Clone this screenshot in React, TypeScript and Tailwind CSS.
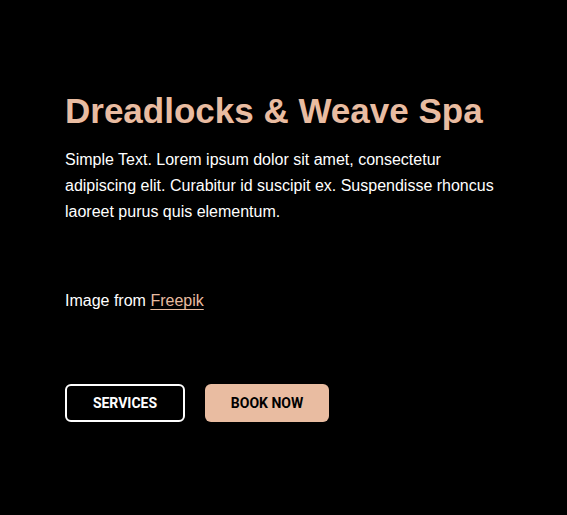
export default function App() {
  return (
    <div className="min-h-[515px] w-full bg-black px-[65px] pt-[90px]" style={{ fontFamily: '"Liberation Sans", Arial, sans-serif' }}>
      <h1 className="text-[35px] font-bold leading-[42px] text-[#e9bca1]">Dreadlocks &amp; Weave Spa</h1>
      <p className="mt-[15px] max-w-[440px] text-[16px] leading-[26px] text-white">
        Simple Text. Lorem ipsum dolor sit amet, consectetur adipiscing elit. Curabitur id suscipit ex. Suspendisse rhoncus laoreet purus quis elementum.
      </p>
      <p className="mt-[63px] text-[16px] leading-[26px] text-white">
        Image from{' '}
        <a href="#" className="text-[#e9bca1] underline underline-offset-[3px]">Freepik</a>
      </p>
      <div className="mt-[70px] flex gap-5" style={{ fontFamily: 'Roboto, sans-serif' }}>
        <button className="h-[38px] w-[120px] rounded-md border-2 border-white text-[14px] font-bold text-white">SERVICES</button>
        <button className="h-[38px] w-[124px] rounded-md bg-[#e9bca1] text-[14px] font-bold text-black">BOOK NOW</button>
      </div>
    </div>
  );
}
